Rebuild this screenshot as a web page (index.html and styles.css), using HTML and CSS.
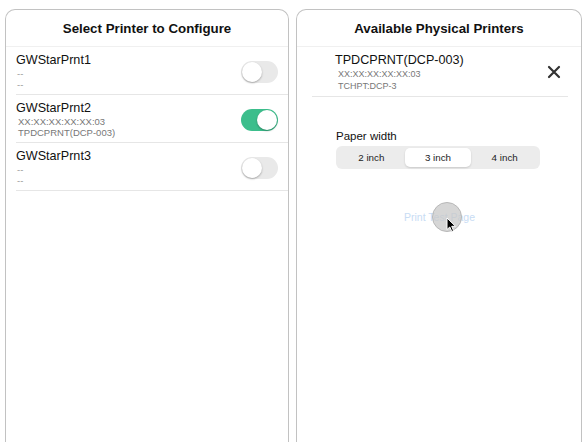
FILE: index.html
```html
<!DOCTYPE html>
<html>
<head>
<meta charset="utf-8">
<link rel="stylesheet" href="styles.css">
</head>
<body>
<div class="screen">
  <section class="panel">
    <h1 class="title">Select Printer to Configure</h1>
    <div class="list">
      <div class="row">
        <div class="info">
          <div class="name">GWStarPrnt1</div>
          <div class="sub dash">--</div>
          <div class="sub dash">--</div>
        </div>
        <div class="toggle"><span class="knob"></span></div>
      </div>
      <div class="row">
        <div class="info">
          <div class="name">GWStarPrnt2</div>
          <div class="sub">XX:XX:XX:XX:XX:03</div>
          <div class="sub">TPDCPRNT(DCP-003)</div>
        </div>
        <div class="toggle on"><span class="knob"></span></div>
      </div>
      <div class="row">
        <div class="info">
          <div class="name">GWStarPrnt3</div>
          <div class="sub dash">--</div>
          <div class="sub dash">--</div>
        </div>
        <div class="toggle"><span class="knob"></span></div>
      </div>
    </div>
  </section>
  <section class="panel">
    <h1 class="title">Available Physical Printers</h1>
    <div class="device">
      <div class="dinfo">
        <div class="dname">TPDCPRNT(DCP-003)</div>
        <div class="dsub">XX:XX:XX:XX:XX:03</div>
        <div class="dsub">TCHPT:DCP-3</div>
      </div>
      <svg class="close" width="14" height="14" viewBox="0 0 14 14"><path d="M2 2 L12 12 M12 2 L2 12" stroke="#333" stroke-width="2.2" stroke-linecap="round"/></svg>
    </div>
    <div class="paper">
      <div class="plabel">Paper width</div>
      <div class="seg">
        <div class="opt">2 inch</div>
        <div class="opt sel">3 inch</div>
        <div class="opt">4 inch</div>
      </div>
    </div>
    <div class="testwrap">
      <span class="test">Print Test Page</span>
      <span class="touch"></span>
      <svg class="cursor" width="12" height="16" viewBox="0 0 12 16"><path d="M1 1 L1 12.5 L3.8 10 L5.8 14.5 L7.6 13.7 L5.7 9.3 L9.5 9.3 Z" fill="#000" stroke="#fff" stroke-width="1"/></svg>
    </div>
  </section>
</div>
</body>
</html>
```
FILE: styles.css
```css
html, body {
  margin: 0;
  padding: 0;
  background: #fff;
  font-family: "Liberation Sans", Arial, sans-serif;
  color: #111;
}
.screen {
  display: flex;
  gap: 7px;
  padding: 9px 5px 0 5px;
  height: 433px;
  overflow: hidden;
}
.panel {
  flex: 0 0 284px;
  border: 1.5px solid #c2c2c2;
  border-bottom: none;
  border-radius: 10px 10px 0 0;
  height: 460px;
  box-sizing: border-box;
}
.title {
  margin: 0;
  font-size: 13.3px;
  font-weight: bold;
  text-align: center;
  height: 36px;
  line-height: 37px;
  color: #111;
  border-bottom: 1px solid #f0f0f0;
}
.list {
  padding-left: 10px;
}
.row {
  display: flex;
  align-items: center;
  height: 47px;
  border-bottom: 1px solid #e6e6e6;
  padding-right: 10px;
}
.info {
  flex: 1;
  padding-top: 1px;
}
.name {
  font-size: 12.6px;
  line-height: 15px;
  color: #111;
}
.sub {
  font-size: 9.5px;
  line-height: 11px;
  color: #777;
  padding-left: 2px;
}
.sub.dash {
  color: #999;
  padding-left: 1px;
}
.toggle {
  width: 37px;
  height: 22px;
  border-radius: 11px;
  background: #e9e9e9;
  position: relative;
  margin-top: 2px;
}
.knob {
  position: absolute;
  left: 1px;
  top: 1px;
  width: 20px;
  height: 20px;
  border-radius: 50%;
  background: #fff;
  box-shadow: 0 1px 2px rgba(0,0,0,0.3);
}
.toggle.on {
  background: #3cbe8c;
}
.toggle.on .knob {
  left: 16px;
}
.device {
  display: flex;
  align-items: center;
  margin: 0 13px 0 15px;
  padding: 6px 0 4px 23px;
  border-bottom: 1px solid #e6e6e6;
}
.dinfo {
  flex: 1;
}
.dname {
  font-size: 12.6px;
  line-height: 15px;
}
.dsub {
  font-size: 9px;
  line-height: 12px;
  color: #777;
  padding-left: 3px;
}
.close {
  margin-right: 7px;
  margin-bottom: 2px;
}
.paper {
  padding: 32px 0 0 39px;
}
.plabel {
  font-size: 11.5px;
  line-height: 14px;
  margin-bottom: 3px;
}
.seg {
  display: flex;
  width: 204px;
  height: 23px;
  background: #ececec;
  border-radius: 6px;
  padding: 2px;
  box-sizing: border-box;
}
.opt {
  flex: 1;
  font-size: 9.8px;
  text-align: center;
  line-height: 19px;
  color: #222;
  border-radius: 5px;
}
.opt.sel {
  background: #fff;
  box-shadow: 0 1px 2px rgba(0,0,0,0.15);
}
.testwrap {
  position: relative;
  text-align: center;
  margin-top: 38px;
  width: 284px;
  height: 20px;
}
.test {
  font-size: 10.5px;
  color: #c8dcf4;
  line-height: 20px;
  margin-left: 1px;
}
.touch {
  position: absolute;
  left: 135px;
  top: -5px;
  width: 28px;
  height: 28px;
  border-radius: 50%;
  background: rgba(200,200,200,0.75);
  border: 1px solid #b8b8b8;
}
.cursor {
  position: absolute;
  left: 149px;
  top: 10px;
}
```
